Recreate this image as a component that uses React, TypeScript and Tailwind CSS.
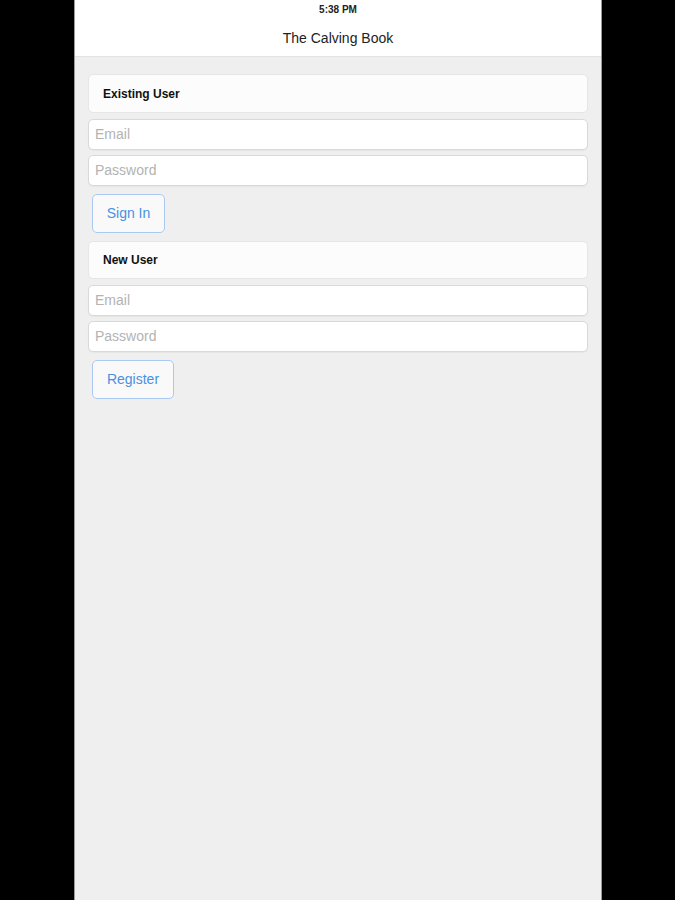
import React from "react";

function Field({ placeholder }: { placeholder: string }) {
  return (
    <div className="h-[31px] bg-white border border-[#d9d9d9] rounded-[5px] flex items-center pl-[6px] shadow-[0_1px_1px_rgba(0,0,0,0.04)]">
      <span className="text-[14px] text-[#b3b3b3]">{placeholder}</span>
    </div>
  );
}

function Section({ title, button, btnW, cardH }: { title: string; button: string; btnW: string; cardH: string }) {
  return (
    <div className="flex flex-col">
      <div className={`${cardH} bg-[#fcfcfc] border border-[#e6e6e6] rounded-[5px] flex items-center pl-[14px]`}>
        <span className="text-[12px] font-bold text-[#111]">{title}</span>
      </div>
      <div className="mt-[6px] flex flex-col gap-[5px]">
        <Field placeholder="Email" />
        <Field placeholder="Password" />
      </div>
      <div className="mt-[8px] ml-[4px]">
        <div
          className={`h-[39px] ${btnW} border border-[#a9c9f2] rounded-[5px] flex items-center justify-center bg-white/60`}
        >
          <span className="text-[14px] text-[#4a90e2]">{button}</span>
        </div>
      </div>
    </div>
  );
}

export default function App() {
  return (
    <div
      className="w-[675px] h-[900px] bg-black flex"
      style={{ fontFamily: '"Liberation Sans", Arial, sans-serif' }}
    >
      <div className="ml-[74px] w-[528px] h-full bg-[#efefef] border-x border-[#9a9a9a] flex flex-col">
        <div className="h-[57px] bg-white border-b border-[#e3e3e3] flex flex-col items-center">
          <div className="mt-[4px] text-[10px] font-bold text-[#222] leading-[12px]">5:38 PM</div>
          <div className="mt-[14px] text-[14px] text-[#222] leading-[16px]">The Calving Book</div>
        </div>
        <div className="px-[13px] pt-[17px] flex flex-col gap-[8px]">
          <Section title="Existing User" button="Sign In" btnW="w-[73px]" cardH="h-[39px]" />
          <Section title="New User" button="Register" btnW="w-[82px]" cardH="h-[38px]" />
        </div>
      </div>
    </div>
  );
}
